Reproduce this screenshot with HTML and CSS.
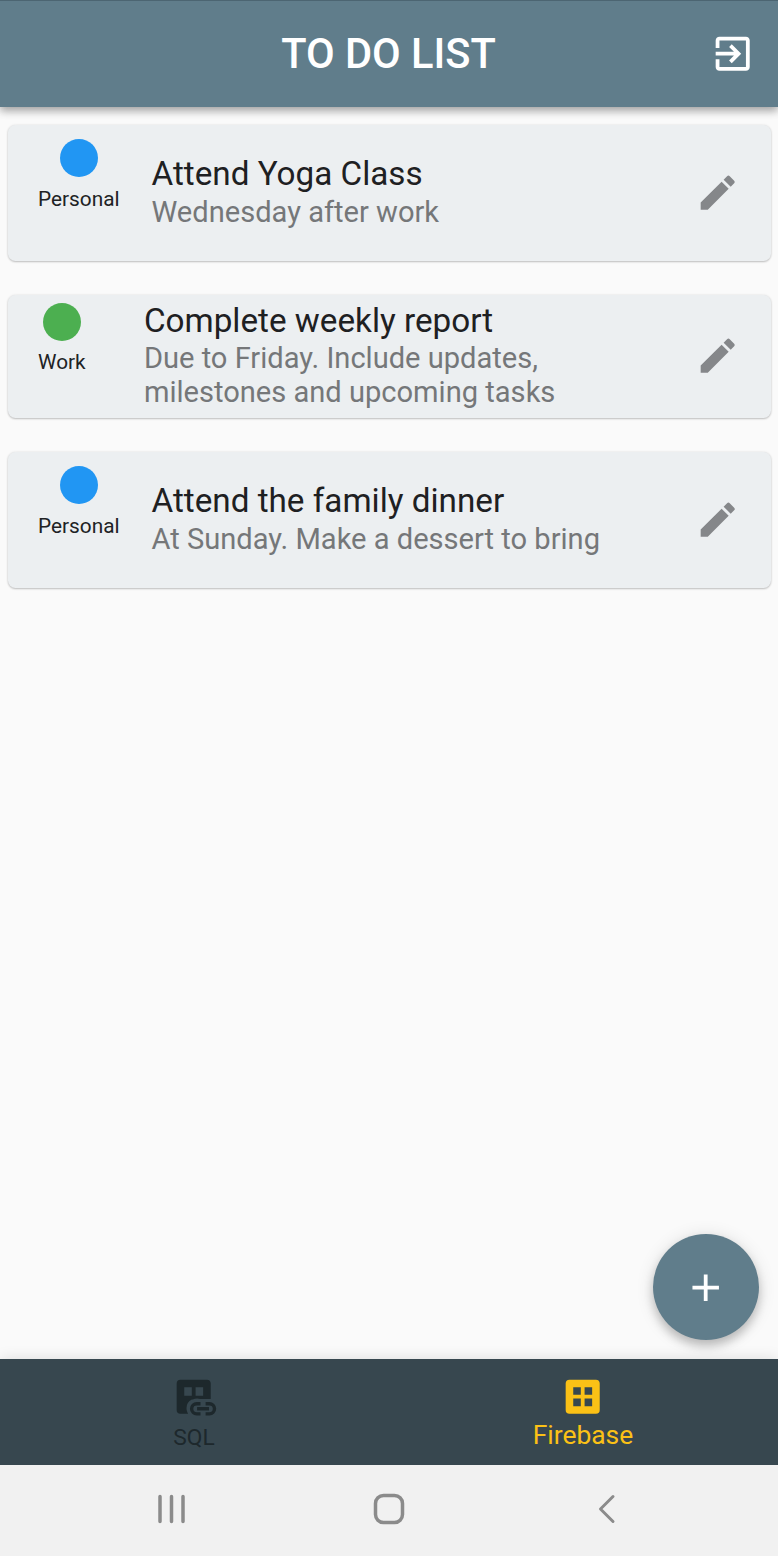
FILE: index.html
```html
<!DOCTYPE html>
<html lang="en">
<head>
<meta charset="utf-8">
<title>To Do List</title>
<link rel="stylesheet" href="styles.css">
</head>
<body>
<svg class="defs" aria-hidden="true">
  <symbol id="edit" viewBox="0 0 24 24"><path d="M3 17.25V21h3.75L17.81 9.94l-3.75-3.75L3 17.25zM20.71 7.04a1 1 0 0 0 0-1.41l-2.34-2.34a1 1 0 0 0-1.41 0l-1.83 1.83 3.75 3.75 1.83-1.83z"/></symbol>
</svg>
<div class="app">
  <header class="bar">
    <h1 class="bar-title">TO DO LIST</h1>
    <svg class="icon exit" viewBox="0 0 24 24"><path d="M10.09 15.59L11.5 17l5-5-5-5-1.41 1.41L12.67 11H3v2h9.67l-2.58 2.59zM19 3H5c-1.11 0-2 .9-2 2v4h2V5h14v14H5v-4H3v4c0 1.1.89 2 2 2h14c1.1 0 2-.9 2-2V5c0-1.1-.9-2-2-2z"/></svg>
  </header>
  <main class="list">
    <article class="card">
      <div class="tag"><span class="dot personal"></span><span class="tag-name">Personal</span></div>
      <div class="text"><h2 class="title">Attend Yoga Class</h2><p class="note">Wednesday after work</p></div>
      <svg class="icon edit"><use href="#edit"/></svg>
    </article>
    <article class="card tight">
      <div class="tag"><span class="dot work"></span><span class="tag-name">Work</span></div>
      <div class="text"><h2 class="title">Complete weekly report</h2><p class="note">Due to Friday. Include updates,<br>milestones and upcoming tasks</p></div>
      <svg class="icon edit"><use href="#edit"/></svg>
    </article>
    <article class="card">
      <div class="tag"><span class="dot personal"></span><span class="tag-name">Personal</span></div>
      <div class="text"><h2 class="title">Attend the family dinner</h2><p class="note">At Sunday. Make a dessert to bring</p></div>
      <svg class="icon edit"><use href="#edit"/></svg>
    </article>
  </main>
  <button class="fab" aria-label="Add"><svg class="icon" viewBox="0 0 24 24"><path d="M19 13h-6v6h-2v-6H5v-2h6V5h2v6h6v2z"/></svg></button>
  <nav class="tabs">
    <div class="tab sql">
      <svg class="icon" viewBox="0 0 24 24"><path fill-rule="evenodd" d="M5 3h14a2 2 0 0 1 2 2v8.200h-5.500a5 5 0 0 0-4 .3H11A5 5 0 0 0 8.200 18c0 1.200.3 2.200.9 3H5a2 2 0 0 1-2-2V5a2 2 0 0 1 2-2zM7 7v4.500h4V7zM13 7v4.500h4V7z"/><path class="link" d="M15.600 15.700h-2a2.700 2.700 0 0 0 0 5.400h2M18.300 15.700h2a2.700 2.700 0 0 1 0 5.400h-2M13.800 18.400h6.300"/></svg>
      <span class="tab-name">SQL</span>
    </div>
    <div class="tab firebase">
      <svg class="icon" viewBox="0 0 24 24"><path fill-rule="evenodd" d="M5 3h14a2 2 0 0 1 2 2v14a2 2 0 0 1-2 2H5a2 2 0 0 1-2-2V5a2 2 0 0 1 2-2zM7 7v4h4V7zM13 7v4h4V7zM7 13v4h4v-4zM13 13v4h4v-4z"/></svg>
      <span class="tab-name">Firebase</span>
    </div>
  </nav>
  <footer class="system">
    <svg class="key" viewBox="0 0 36 36"><path d="M7 5.500v25M18.500 5.500v25M30 5.500v25"/></svg>
    <svg class="key" viewBox="0 0 36 36"><rect x="4.500" y="4.500" width="27" height="27" rx="8"/></svg>
    <svg class="key back" viewBox="0 0 36 36"><path d="M24 5.500L11.500 18 24 30.500"/></svg>
  </footer>
</div>
</body>
</html>
```
FILE: styles.css
```css
* { box-sizing: border-box; margin: 0; padding: 0; }
body { font-family: Roboto, "Liberation Sans", sans-serif; background: #fafafa; }
.defs { position: absolute; width: 0; height: 0; }
.app { position: relative; display: flex; flex-direction: column; width: 778px; height: 1556px; }
.icon { display: block; flex: none; width: 45.4px; height: 45.4px; fill: currentColor; overflow: visible; }

.bar { display: grid; grid-template-columns: 1fr auto 1fr; align-items: center; height: 107px; padding-right: 23px; background: #607d8b; border-top: 1px solid #4c6572; color: #fff; box-shadow: 0 4px 8px rgba(0,0,0,.24), 0 2px 10px rgba(0,0,0,.18); z-index: 1; }
.bar-title { grid-column: 2; margin-left: 22px; font-size: 41.600px; line-height: 50px; font-weight: 500; white-space: nowrap; }
.exit { justify-self: end; }

.list { flex: 1; display: flex; flex-direction: column; gap: 34px; padding: 17.500px 7.500px 0; }
.card { display: flex; align-items: center; height: 136px; padding: 0 30.500px; background: #eceff1; border-radius: 7.500px; box-shadow: 0 1px 2px rgba(0,0,0,.22), 0 0 3px rgba(0,0,0,.08); }
.tight { height: 123px; }
.tag { display: flex; flex-direction: column; align-items: center; align-self: flex-start; padding-top: 14.500px; }
.tight .tag { padding-top: 8.500px; }
.dot { width: 38px; height: 38px; border-radius: 50%; }
.personal { background: #2196f3; }
.work { background: #4caf50; }
.tag-name { margin-top: 9.500px; font-size: 20.800px; line-height: 25px; color: #202224; white-space: nowrap; }
.tight .tag-name { margin-top: 9px; }
.text { flex: 1; margin-left: 32px; padding-bottom: 3px; white-space: nowrap; }
.tight .text { margin-left: 58.300px; }
.title { padding-bottom: 2px; font-size: 33.250px; line-height: 39px; font-weight: 400; color: #1e2022; }
.tight .title { padding-bottom: 0; line-height: 40px; }
.note { font-size: 29.080px; line-height: 34px; color: #757779; }
.edit { color: #85878a; }

.fab { position: absolute; right: 19px; top: 1234px; display: grid; place-items: center; width: 106px; height: 106px; padding-top: 1px; border: 0; border-radius: 50%; background: #607d8b; color: #fff; box-shadow: 0 6px 10px rgba(0,0,0,.2), 0 2px 18px rgba(0,0,0,.12); }

.tabs { display: flex; height: 106px; background: #37474f; box-shadow: 0 0 14px rgba(0,0,0,.12); }
.tab { flex: 1; display: flex; flex-direction: column; align-items: center; padding: 15px 1px 0 0; }
.sql { color: #1d282c; }
.firebase { color: #fbc116; }
.link { fill: none; stroke: currentColor; stroke-width: 1.800; }
.tab-name { font-size: 26.400px; line-height: 32px; }
.sql .tab-name { font-size: 22.800px; line-height: 38px; }

.system { display: flex; justify-content: space-between; align-items: center; height: 91px; padding: 0 153px 4px; background: #f1f1f1; }
.key { width: 36px; height: 36px; fill: none; stroke: #8b8b8b; stroke-width: 3.500; stroke-linecap: round; stroke-linejoin: round; }
.back { stroke-width: 3; }
```
